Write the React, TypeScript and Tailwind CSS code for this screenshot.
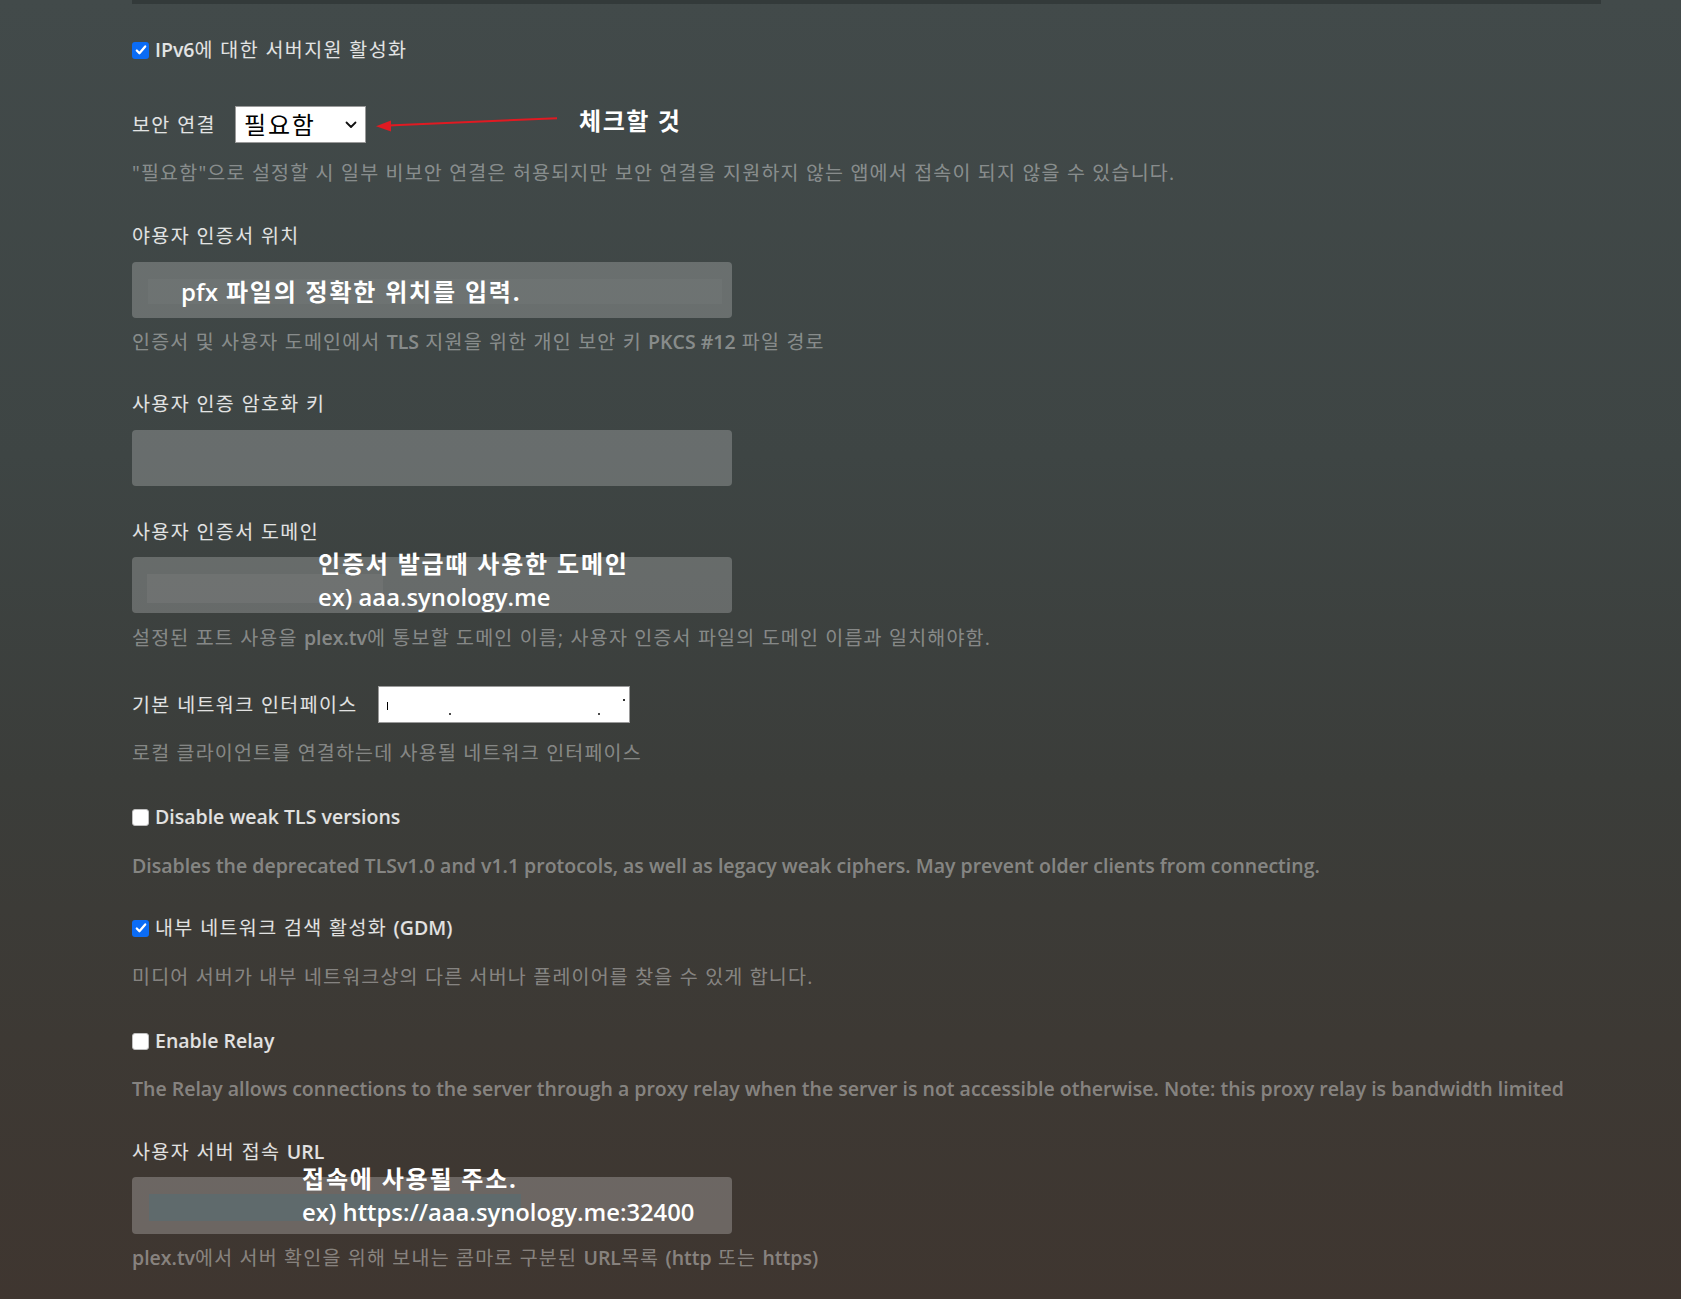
import React from "react";

function L({ children }: { children: React.ReactNode }) {
  return <span className="font-semibold tracking-normal">{children}</span>;
}

function Check({ checked }: { checked: boolean }) {
  if (checked) {
    return (
      <span className="inline-flex h-[17px] w-[17px] shrink-0 items-center justify-center rounded-[3px] bg-[#0b6cf5]">
        <svg viewBox="0 0 16 16" className="h-[14px] w-[14px]">
          <path d="M3.2 8.6l3 3.1L12.8 3.9" fill="none" stroke="white" strokeWidth="2.6" strokeLinecap="round" strokeLinejoin="round" />
        </svg>
      </span>
    );
  }
  return <span className="inline-block h-[17px] w-[17px] shrink-0 rounded-[3px] border border-[#bfbfbf] bg-white" />;
}

function Help({ children, className = "" }: { children: React.ReactNode; className?: string }) {
  return <div className={`h-[24px] whitespace-nowrap text-[19.5px] leading-[24px] tracking-[1.2px] text-white/40 ${className}`}>{children}</div>;
}

function Label({ children, className = "" }: { children: React.ReactNode; className?: string }) {
  return <div className={`h-[24px] whitespace-nowrap text-[19.5px] leading-[24px] text-white/85 ${className}`}>{children}</div>;
}

function CheckRow({ checked, children, className = "" }: { checked: boolean; children: React.ReactNode; className?: string }) {
  return (
    <div className={`flex h-[24px] items-center gap-[6px] ${className}`}>
      <Check checked={checked} />
      <span className="whitespace-nowrap text-[19.5px] leading-[24px] text-white/85">{children}</span>
    </div>
  );
}

function Note({ children, className = "" }: { children: React.ReactNode; className?: string }) {
  return <span className={`absolute whitespace-nowrap text-[24px] font-bold leading-[30px] tracking-[1.8px] text-white ${className}`}>{children}</span>;
}

function Example({ children, className = "" }: { children: React.ReactNode; className?: string }) {
  return <span className={`absolute whitespace-nowrap text-[23.8px] font-semibold leading-[30px] tracking-normal text-white ${className}`}>{children}</span>;
}

export default function App() {
  return (
    <div className="min-h-[1299px] w-full overflow-hidden bg-[linear-gradient(180deg,#424a4a_0%,#3e4544_35%,#3b3d3a_60%,#3d3934_80%,#3f3630_100%)] pb-[30px] pl-[132px] font-['Open_Sans','Noto_Sans_CJK_KR',sans-serif] tracking-[1.4px]">
      <div className="h-[4px] w-[1469px] bg-[#333a3a]" />

      <CheckRow checked className="mt-[34px]">
        <L>IPv6</L>에 대한 서버지원 활성화
      </CheckRow>

      <div className="mt-[44px] flex h-[37px] items-center">
        <div className="w-[103px] shrink-0 whitespace-nowrap text-[19.5px] leading-[24px] text-white/85">보안 연결</div>
        <div className="flex h-[37px] w-[131px] shrink-0 items-center justify-between border border-[#9a9a9a] bg-white pl-[8px] pr-[8px]">
          <span className="text-[24px] leading-[30px] tracking-[1.8px] text-black">필요함</span>
          <svg viewBox="0 0 12 8" className="h-[8px] w-[12px]">
            <path d="M1.5 1.5L6 6l4.5-4.5" fill="none" stroke="#111" strokeWidth="1.8" strokeLinecap="round" strokeLinejoin="round" />
          </svg>
        </div>
        <svg viewBox="0 0 192 20" className="ml-[2px] h-[20px] w-[192px] shrink-0">
          <line x1="20" y1="10.6" x2="189" y2="3.2" stroke="#e01a22" strokeWidth="2" />
          <polygon points="8,11.2 23,5.5 23,16.5" fill="#e01a22" />
        </svg>
        <span className="ml-[19px] -translate-y-[4px] whitespace-nowrap text-[24px] font-bold leading-[30px] tracking-[1.6px] text-white">체크할 것</span>
      </div>

      <Help className="mt-[18px]">"필요함"으로 설정할 시 일부 비보안 연결은 허용되지만 보안 연결을 지원하지 않는 앱에서 접속이 되지 않을 수 있습니다.</Help>

      <Label className="mt-[39px]">야용자 인증서 위치</Label>
      <div className="relative mt-[14px] h-[56px] w-[600px] rounded-[4px] bg-white/[0.22] pl-[16px] pt-[17px]">
        <div className="h-[25px] w-[574px] bg-white/[0.03]" />
        <Note className="left-[49px] top-[15px] tracking-[1.5px]">
          <span className="font-semibold tracking-normal">pfx</span> 파일의 정확한 위치를 입력.
        </Note>
      </div>
      <Help className="mt-[12px]">
        인증서 및 사용자 도메인에서 <L>TLS</L> 지원을 위한 개인 보안 키 <L>PKCS #12</L> 파일 경로
      </Help>

      <Label className="mt-[38px]">사용자 인증 암호화 키</Label>
      <div className="mt-[14px] h-[56px] w-[600px] rounded-[4px] bg-white/[0.22]" />

      <Label className="mt-[34px]">사용자 인증서 도메인</Label>
      <div className="relative mt-[13px] h-[56px] w-[600px] rounded-[4px] bg-white/[0.22] pl-[15px] pt-[17px]">
        <div className="h-[29px] w-[236px] bg-white/[0.05]" />
        <Note className="left-[186px] top-[-8px]">인증서 발급때 사용한 도메인</Note>
        <Example className="left-[186px] top-[25px]">ex) aaa.synology.me</Example>
      </div>
      <Help className="mt-[13px]">
        설정된 포트 사용을 <L>plex.tv</L>에 통보할 도메인 이름; 사용자 인증서 파일의 도메인 이름과 일치해야함.
      </Help>

      <div className="mt-[36px] flex h-[37px] items-center gap-[20px]">
        <div className="whitespace-nowrap text-[19.5px] leading-[24px] text-white/85">기본 네트워크 인터페이스</div>
        <div className="flex h-[37px] w-[252px] shrink-0 border border-[#9a9a9a] bg-white pl-[8px]">
          <span className="mt-[15px] h-[8px] w-[1px] bg-black" />
          <span className="ml-[61px] mt-[26px] h-[2px] w-[2px] bg-black/70" />
          <span className="ml-[147px] mt-[26px] h-[2px] w-[2px] bg-black/70" />
          <span className="ml-[23px] mt-[12px] h-[2px] w-[2px] bg-black/80" />
        </div>
      </div>
      <Help className="mt-[18px]">로컬 클라이언트를 연결하는데 사용될 네트워크 인터페이스</Help>

      <CheckRow checked={false} className="mt-[40px]">
        <L>Disable weak TLS versions</L>
      </CheckRow>
      <Help className="mt-[25px] font-semibold tracking-normal">
        Disables the deprecated TLSv1.0 and v1.1 protocols, as well as legacy weak ciphers. May prevent older clients from connecting.
      </Help>

      <CheckRow checked className="mt-[38px]">
        내부 네트워크 검색 활성화 <L>(GDM)</L>
      </CheckRow>
      <Help className="mt-[25px]">미디어 서버가 내부 네트워크상의 다른 서버나 플레이어를 찾을 수 있게 합니다.</Help>

      <CheckRow checked={false} className="mt-[40px]">
        <L>Enable Relay</L>
      </CheckRow>
      <Help className="mt-[24px] font-semibold tracking-normal">
        The Relay allows connections to the server through a proxy relay when the server is not accessible otherwise. Note: this proxy relay is bandwidth limited
      </Help>

      <Label className="mt-[39px]">
        사용자 서버 접속 <L>URL</L>
      </Label>
      <div className="relative mt-[13px] h-[57px] w-[600px] rounded-[4px] bg-white/[0.24] pl-[17px] pt-[17px]">
        <div className="h-[27px] w-[372px] bg-[#5f6a6c]" />
        <Note className="left-[170px] top-[-13px]">접속에 사용될 주소.</Note>
        <Example className="left-[170px] top-[20px]">ex) https://aaa.synology.me:32400</Example>
      </div>
      <Help className="mt-[12px]">
        <L>plex.tv</L>에서 서버 확인을 위해 보내는 콤마로 구분된 <L>URL</L>목록 <L>(http</L> 또는 <L>https)</L>
      </Help>
    </div>
  );
}
